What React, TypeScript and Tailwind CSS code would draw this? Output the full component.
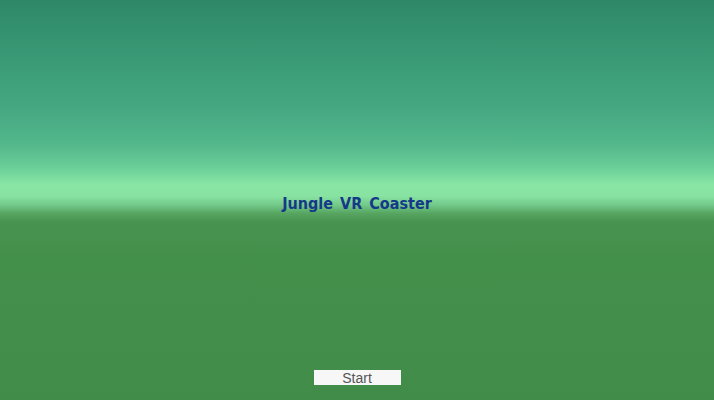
import * as React from "react";

export default function App() {
  return (
    <div className="flex h-[400px] w-full flex-col items-center overflow-hidden bg-[linear-gradient(to_bottom,#2e8868_0px,#3a9a76_60px,#45a882_110px,#54b88c_145px,#6acf98_168px,#88e5a4_184px,#88e3a2_196px,#72c98a_205px,#58a662_213px,#47934f_222px,#43904b_260px,#428c4a_400px)]">
      <h1 className="mt-[194px] font-['DejaVu_Sans_Condensed','DejaVu_Sans',sans-serif] text-[16px] font-bold leading-[20px] text-[#163889] [word-spacing:2px]">
        Jungle VR Coaster
      </h1>
      <button className="mt-auto mb-[15px] flex h-[15px] w-[87px] items-center justify-center bg-[#f7f7f7] font-['Liberation_Sans',Arial,sans-serif] text-[14px] leading-none text-[#555]">
        Start
      </button>
    </div>
  );
}
